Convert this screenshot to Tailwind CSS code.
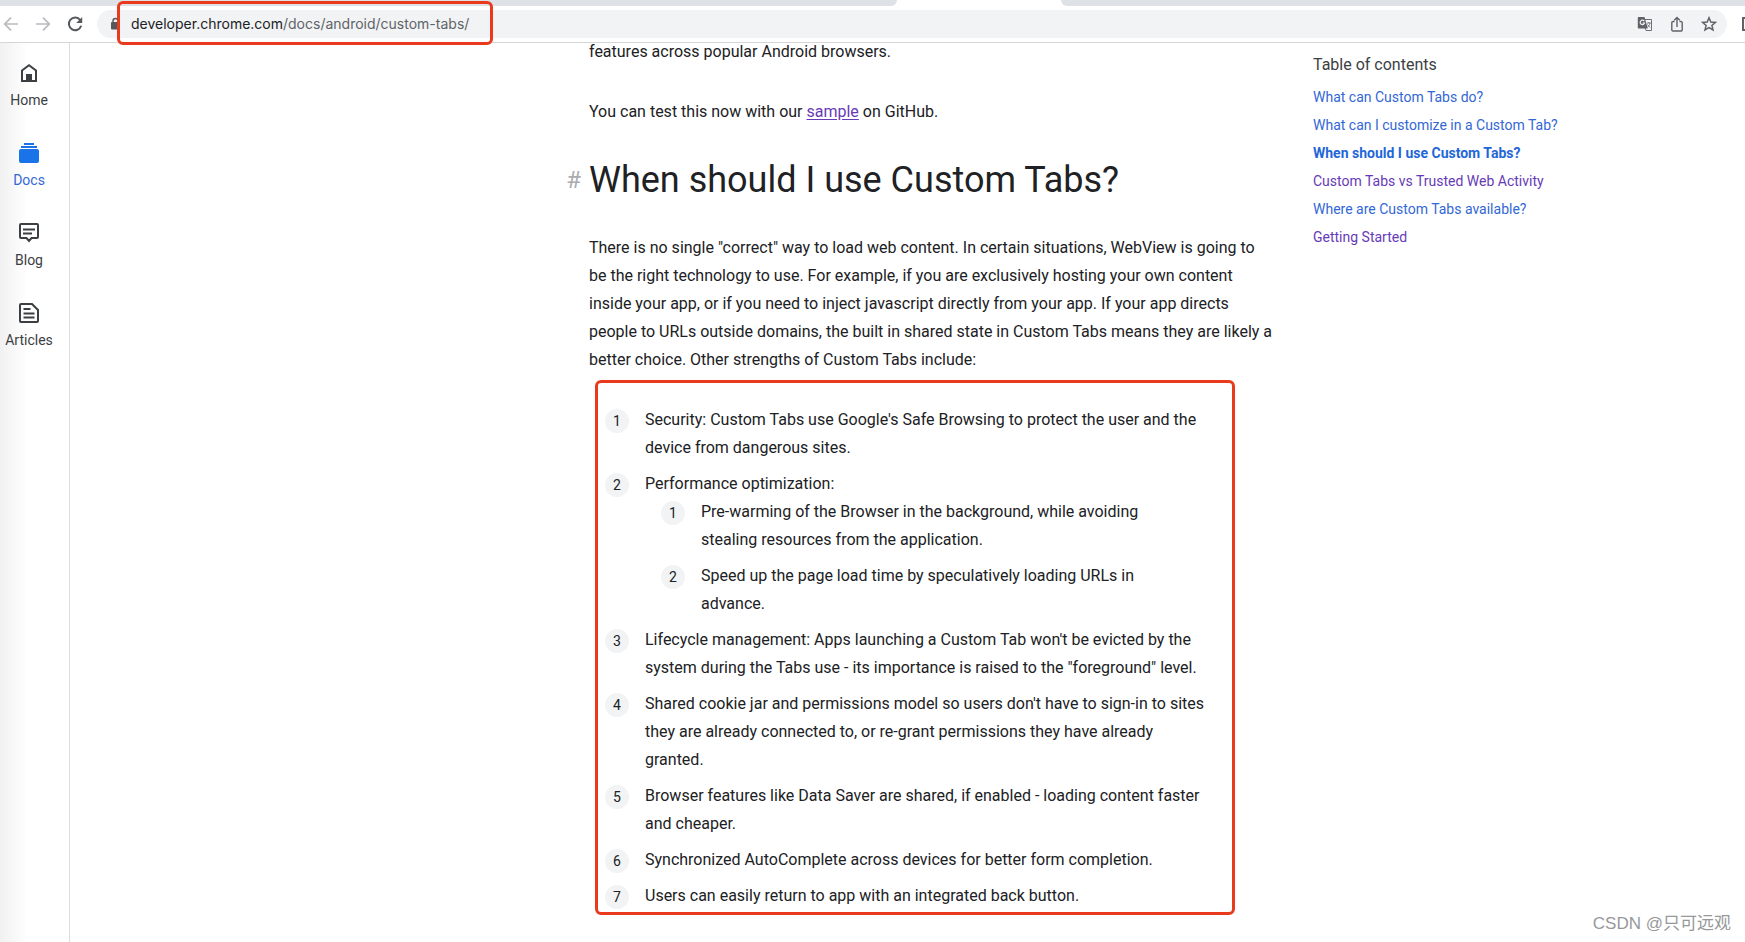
<!DOCTYPE html>
<html lang="en">
<head>
<meta charset="utf-8">
<title>Custom Tabs - Chrome Developers</title>
<script src="https://cdn.jsdelivr.net/npm/@tailwindcss/browser@4"></script>
</head>
<body class="relative flex h-screen flex-col overflow-hidden bg-white font-['Roboto',sans-serif] text-[#202124]">

<!-- Browser chrome -->
<header class="relative shrink-0 border-b border-[#d5d6d9] bg-white">
  <div class="flex h-1.5 justify-between bg-white">
    <div class="w-[51.4%] rounded-br-md bg-[#dee1e6]"></div>
    <div class="w-[39.2%] rounded-bl-md bg-[#dee1e6]"></div>
  </div>
  <div class="flex h-9 items-center">
    <nav class="flex w-[97px] shrink-0 items-center gap-4 pl-[3px]" aria-label="Browser">
      <button aria-label="Back" class="size-4"><svg viewBox="0 0 16 16" class="size-4" fill="none" stroke="#b9bbbe" stroke-width="1.7"><path d="M15 8H2M8 1.7 1.7 8 8 14.3"/></svg></button>
      <button aria-label="Forward" class="size-4"><svg viewBox="0 0 16 16" class="size-4" fill="none" stroke="#b9bbbe" stroke-width="1.7"><path d="M1 8h13M8 1.7 14.3 8 8 14.3"/></svg></button>
      <button aria-label="Reload" class="size-4"><svg viewBox="0 0 16 16" class="size-4" fill="none" stroke="#55585c" stroke-width="2"><path d="M13.2 4A6.3 6.3 0 1 0 14.2 9.8"/><path d="M15.2 1v6H9.2z" fill="#55585c" stroke="none"/></svg></button>
    </nav>
    <div class="flex h-7 min-w-0 flex-1 items-center rounded-full bg-[#f1f3f4] pr-[10px] pl-3">
      <svg viewBox="0 0 12 14" class="mr-2.5 h-3.5 w-3" fill="#55585c"><rect x="2" y="5" width="9" height="7.5" rx="1"/><path d="M4 6V4a2.5 2.5 0 0 1 5 0v2" fill="none" stroke="#55585c" stroke-width="1.4"/></svg>
      <div class="flex-1 font-['Inter',sans-serif] text-sm whitespace-nowrap text-[#5f6368]" role="textbox" aria-label="Address"><span class="text-[#202124]">developer.chrome.com</span>/docs/android/custom-tabs/</div>
      <div class="flex items-center gap-4">
        <button aria-label="Translate" class="size-4"><svg viewBox="0 0 16 16" class="size-4"><path d="M6 3.5h8.5v11H9z" fill="#f8f9fa" stroke="#6b6e72"/><path d="M1.5 1h6l3.3 11.5H1.5A1 1 0 0 1 .8 11.700V1.800A.8.8 0 0 1 1.500 1z" fill="#5f6368"/><path d="M7.300 5.300A2.200 2.200 0 1 0 7.500 7H5.500" fill="none" stroke="#f1f3f4" stroke-width="1.200"/><path d="M9.800 7h4M11.800 6v1M13 7c-.3 2-1.500 3.500-2.500 4.300M10.500 8.500c.7 1.400 1.700 2.300 2.800 3" fill="none" stroke="#6b6e72" stroke-width=".9"/></svg></button>
        <button aria-label="Share" class="size-4"><svg viewBox="0 0 16 16" class="size-4" fill="none" stroke="#5f6368" stroke-width="1.400"><path d="M5.500 5.500H4a1.200 1.200 0 0 0-1.200 1.200v7A1.200 1.200 0 0 0 4 15h8a1.200 1.200 0 0 0 1.200-1.200v-7A1.200 1.200 0 0 0 12 5.500h-1.500M8 11V1.800M5.200 4.200 8 1.400l2.800 2.800"/></svg></button>
        <button aria-label="Bookmark" class="size-4"><svg viewBox="0 0 16 16" class="size-4" fill="none" stroke="#5f6368" stroke-width="1.500"><path d="m8 1.800 1.800 4.200 4.600.4-3.500 3 1.100 4.500L8 11.500l-4 2.400 1.100-4.500-3.500-3L6.200 6z"/></svg></button>
      </div>
    </div>
    <div class="ml-[15px] h-3.5 w-[3px] border-2 border-r-0 border-[#5f6368]"></div>
  </div>
  <div class="absolute top-px left-[117px] h-11 w-[376px] rounded-md border-3 border-[#ea3a1e]"></div>
</header>

<div class="flex min-h-0 flex-1">
  <!-- Site sections -->
  <nav class="flex w-[70px] shrink-0 flex-col gap-[26px] border-r border-[#dadce0] bg-linear-to-r from-[#f1f1f1] to-white to-40% pt-[18px] pr-[11px] text-sm text-[#3c4043]" aria-label="Sections">
    <a href="#" class="flex flex-col items-center leading-[30px]"><svg viewBox="0 0 24 24" class="size-6" fill="none" stroke="#3c4043" stroke-width="2"><path d="M5 20V9.500L12 4.200l7 5.300V20z"/><path d="M9 13h6v7H9z" fill="#3c4043" stroke="none"/></svg>Home</a>
    <a href="#" class="flex flex-col items-center leading-[30px] text-[#3367d6]"><svg viewBox="0 0 24 24" class="size-6" fill="#1a73e8"><rect x="7" y="2" width="10" height="2"/><rect x="4" y="5" width="16" height="2"/><rect x="2" y="8" width="20" height="14" rx="2"/></svg>Docs</a>
    <a href="#" class="flex flex-col items-center leading-[30px]"><svg viewBox="0 0 24 24" class="size-6" fill="none" stroke="#3c4043" stroke-width="2"><path d="M4 3h16a1 1 0 0 1 1 1v12a1 1 0 0 1-1 1h-5.500L12 20l-2.500-3H4a1 1 0 0 1-1-1V4a1 1 0 0 1 1-1zM6 8.500h12M6 12.500h9"/></svg>Blog</a>
    <a href="#" class="flex flex-col items-center leading-[30px]"><svg viewBox="0 0 24 24" class="size-6" fill="none" stroke="#3c4043" stroke-width="2"><path d="M4 3h11l6 6v11a1 1 0 0 1-1 1H4a1 1 0 0 1-1-1V4a1 1 0 0 1 1-1zM6.500 8h7M6.500 12.500h11M6.500 16.500h11"/></svg>Articles</a>
  </nav>

  <div class="grid min-w-0 flex-1 grid-cols-[minmax(0,1fr)_700px_432px] overflow-hidden">
    <main class="col-start-2 -mt-[5px] -ml-6 mr-6 text-base leading-7">
      <p>features across popular Android browsers.</p>
      <p class="mt-8">You can test this now with our <a href="#" class="text-[#673ab7] underline underline-offset-2">sample</a> on GitHub.</p>
      <h2 class="relative mt-8 text-4xl leading-11"><a href="#" class="absolute right-full mr-2 text-2xl leading-11 text-[#aaacaf]" aria-label="Link to section">#</a>When should I use Custom Tabs?</h2>
      <p class="mt-8">There is no single "correct" way to load web content. In certain situations, WebView is going to<br>be the right technology to use. For example, if you are exclusively hosting your own content<br>inside your app, or if you need to inject javascript directly from your app. If your app directs<br>people to URLs outside domains, the built in shared state in Custom Tabs means they are likely a<br>better choice. Other strengths of Custom Tabs include:</p>

      <div class="mt-1.5 mr-[54px] ml-1.5 rounded-md border-3 border-[#ea3a1e] pt-[23px] pb-0.5 pl-[7px]">
        <ol class="flex flex-col gap-2">
          <li class="flex gap-4"><span class="mt-[3px] size-6 shrink-0 rounded-full bg-[#f1f3f4] text-center text-sm leading-6">1</span><div>Security: Custom Tabs use Google's Safe Browsing to protect the user and the<br>device from dangerous sites.</div></li>
          <li class="flex gap-4"><span class="mt-[3px] size-6 shrink-0 rounded-full bg-[#f1f3f4] text-center text-sm leading-6">2</span><div>Performance optimization:
            <ol class="flex flex-col gap-2 pl-4">
              <li class="flex gap-4"><span class="mt-[3px] size-6 shrink-0 rounded-full bg-[#f1f3f4] text-center text-sm leading-6">1</span><div>Pre-warming of the Browser in the background, while avoiding<br>stealing resources from the application.</div></li>
              <li class="flex gap-4"><span class="mt-[3px] size-6 shrink-0 rounded-full bg-[#f1f3f4] text-center text-sm leading-6">2</span><div>Speed up the page load time by speculatively loading URLs in<br>advance.</div></li>
            </ol></div></li>
          <li class="flex gap-4"><span class="mt-[3px] size-6 shrink-0 rounded-full bg-[#f1f3f4] text-center text-sm leading-6">3</span><div>Lifecycle management: Apps launching a Custom Tab won't be evicted by the<br>system during the Tabs use - its importance is raised to the "foreground" level.</div></li>
          <li class="flex gap-4"><span class="mt-[3px] size-6 shrink-0 rounded-full bg-[#f1f3f4] text-center text-sm leading-6">4</span><div>Shared cookie jar and permissions model so users don't have to sign-in to sites<br>they are already connected to, or re-grant permissions they have already<br>granted.</div></li>
          <li class="flex gap-4"><span class="mt-[3px] size-6 shrink-0 rounded-full bg-[#f1f3f4] text-center text-sm leading-6">5</span><div>Browser features like Data Saver are shared, if enabled - loading content faster<br>and cheaper.</div></li>
          <li class="flex gap-4"><span class="mt-[3px] size-6 shrink-0 rounded-full bg-[#f1f3f4] text-center text-sm leading-6">6</span><div>Synchronized AutoComplete across devices for better form completion.</div></li>
          <li class="flex gap-4"><span class="mt-[3px] size-6 shrink-0 rounded-full bg-[#f1f3f4] text-center text-sm leading-6">7</span><div>Users can easily return to app with an integrated back button.</div></li>
        </ol>
      </div>
    </main>

    <aside class="pt-2 text-sm leading-7" aria-label="Table of contents">
      <h3 class="mb-1 text-base leading-7 text-[#3c4043]">Table of contents</h3>
      <ul class="text-[#3367d6]">
        <li><a href="#">What can Custom Tabs do?</a></li>
        <li><a href="#">What can I customize in a Custom Tab?</a></li>
        <li><a href="#" class="font-bold text-[#1f67d8]">When should I use Custom Tabs?</a></li>
        <li><a href="#" class="text-[#673ab7]">Custom Tabs vs Trusted Web Activity</a></li>
        <li><a href="#">Where are Custom Tabs available?</a></li>
        <li><a href="#" class="text-[#673ab7]">Getting Started</a></li>
      </ul>
    </aside>
  </div>
</div>

<div class="absolute right-3.5 bottom-1.5 font-['Liberation_Sans','Noto_Sans_CJK_SC',sans-serif] text-[17px] leading-6 text-[#96989b]">CSDN @只可远观</div>
</body>
</html>
